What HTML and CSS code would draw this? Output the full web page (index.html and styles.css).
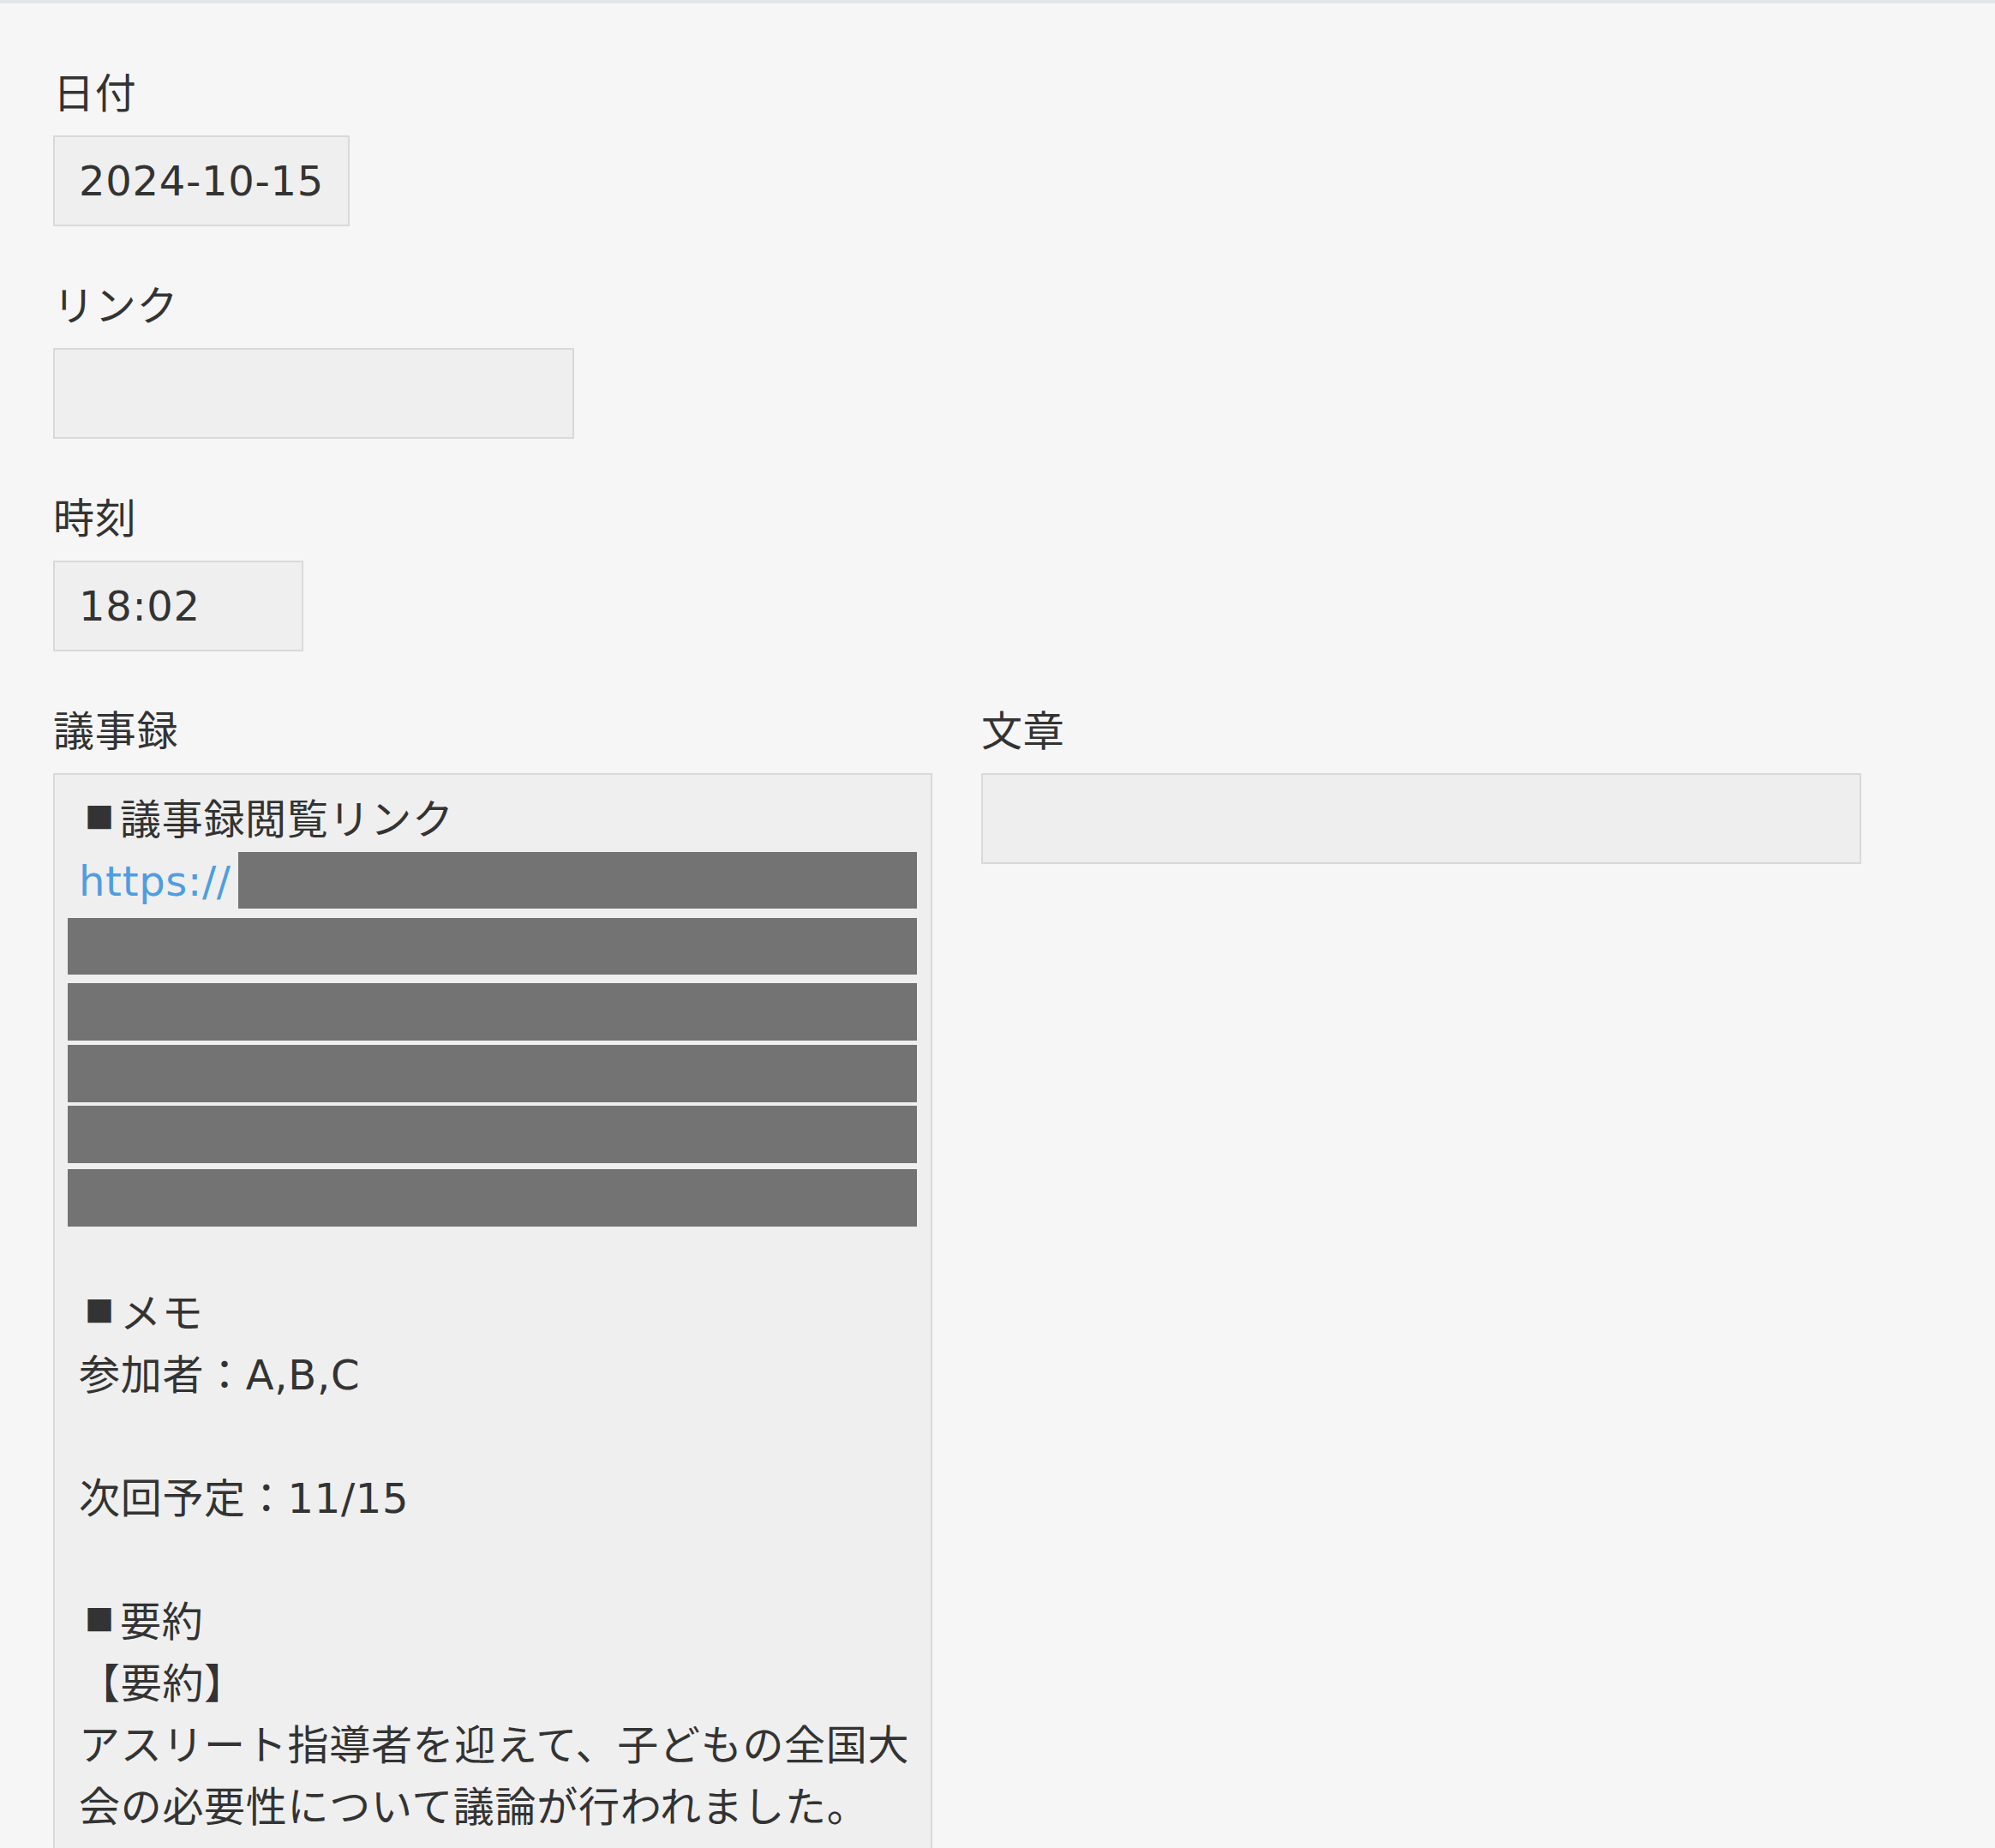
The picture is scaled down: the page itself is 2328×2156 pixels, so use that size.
FILE: index.html
```html
<!DOCTYPE html>
<html lang="ja">
<head>
<meta charset="utf-8">
<title>議事録</title>
<link rel="stylesheet" href="styles.css">
</head>
<body>
<main class="form">
  <div class="field">
    <div class="label">日付</div>
    <div class="input w-date">2024-10-15</div>
  </div>
  <div class="field">
    <div class="label">リンク</div>
    <div class="input w-link"></div>
  </div>
  <div class="field">
    <div class="label">時刻</div>
    <div class="input w-time">18:02</div>
  </div>
  <div class="row">
    <div class="col">
      <div class="label">議事録</div>
      <div class="memo">
        <div class="line"><span class="sq">■</span>議事録閲覧リンク</div>
        <div class="line url"><span class="link">https://</span><span class="bar-inline"></span></div>
        <div class="redact-block">
          <div class="bar b1"></div>
          <div class="bar b2"></div>
          <div class="bar b3"></div>
          <div class="bar b4"></div>
          <div class="bar b5"></div>
        </div>
        <div class="line"></div>
        <div class="line"><span class="sq">■</span>メモ</div>
        <div class="line">参加者：A,B,C</div>
        <div class="line"></div>
        <div class="line">次回予定：11/15</div>
        <div class="line"></div>
        <div class="line"><span class="sq">■</span>要約</div>
        <div class="line">【要約】</div>
        <div class="line">アスリート指導者を迎えて、子どもの全国大</div>
        <div class="line">会の必要性について議論が行われました。</div>
        <div class="line"></div>
      </div>
    </div>
    <div class="col">
      <div class="label">文章</div>
      <div class="input w-full"></div>
    </div>
  </div>
</main>
</body>
</html>
```

FILE: styles.css
```css
html, body {
  margin: 0;
  padding: 0;
}

body {
  height: 2156px;
  box-sizing: border-box;
  overflow: hidden;
  background: #f6f6f6;
  border-top: 4px solid #e3e6e8;
  color: #333333;
  font-family: "DejaVu Sans", "Noto Sans CJK JP", sans-serif;
  font-size: 48px;
  line-height: 72px;
  letter-spacing: 0.7px;
}

.form {
  padding: 69px 0 0 62px;
}

.field {
  margin-bottom: 57px;
}

.label {
  height: 72px;
  margin-bottom: 13px;
  white-space: nowrap;
}

.input {
  box-sizing: border-box;
  height: 106px;
  border: 2px solid #d9d9d9;
  background: #efefef;
  padding: 15px 28px;
  white-space: nowrap;
}

.w-date { width: 346px; }
.w-link { width: 608px; }
.w-time { width: 292px; }
.w-full { width: 1027px; background: #eeeeee; }

.row {
  display: grid;
  grid-template-columns: 1026px 1027px;
  column-gap: 57px;
  align-items: start;
}

.memo {
  box-sizing: border-box;
  border: 2px solid #d9d9d9;
  border-bottom: none;
  background: #efefef;
  padding: 16px 16px 120px 28px;
  white-space: nowrap;
}

.line {
  height: 72px;
}

.sq {
  display: inline-block;
  width: 48px;
  text-align: center;
  font-family: "Noto Sans CJK JP", sans-serif;
  font-size: 34px;
  vertical-align: 6px;
  line-height: 48px;
  letter-spacing: 0;
}

.url {
  display: flex;
  align-items: flex-start;
}

.link {
  color: #4e9de2;
}

.bar-inline {
  flex: 1;
  height: 66px;
  margin-top: 2px;
  margin-left: 8px;
  background: #737373;
}

.redact-block {
  display: flex;
  flex-direction: column;
  box-sizing: border-box;
  height: 360px;
  margin-left: -13px;
  padding-top: 7px;
}

.bar {
  flex: none;
  height: 67px;
  background: #737373;
}

.b1 { height: 66px; }
.b2 { margin-top: 10px; }
.b3 { margin-top: 5px; }
.b4 { margin-top: 4px; }
.b5 { margin-top: 7px; }
```
